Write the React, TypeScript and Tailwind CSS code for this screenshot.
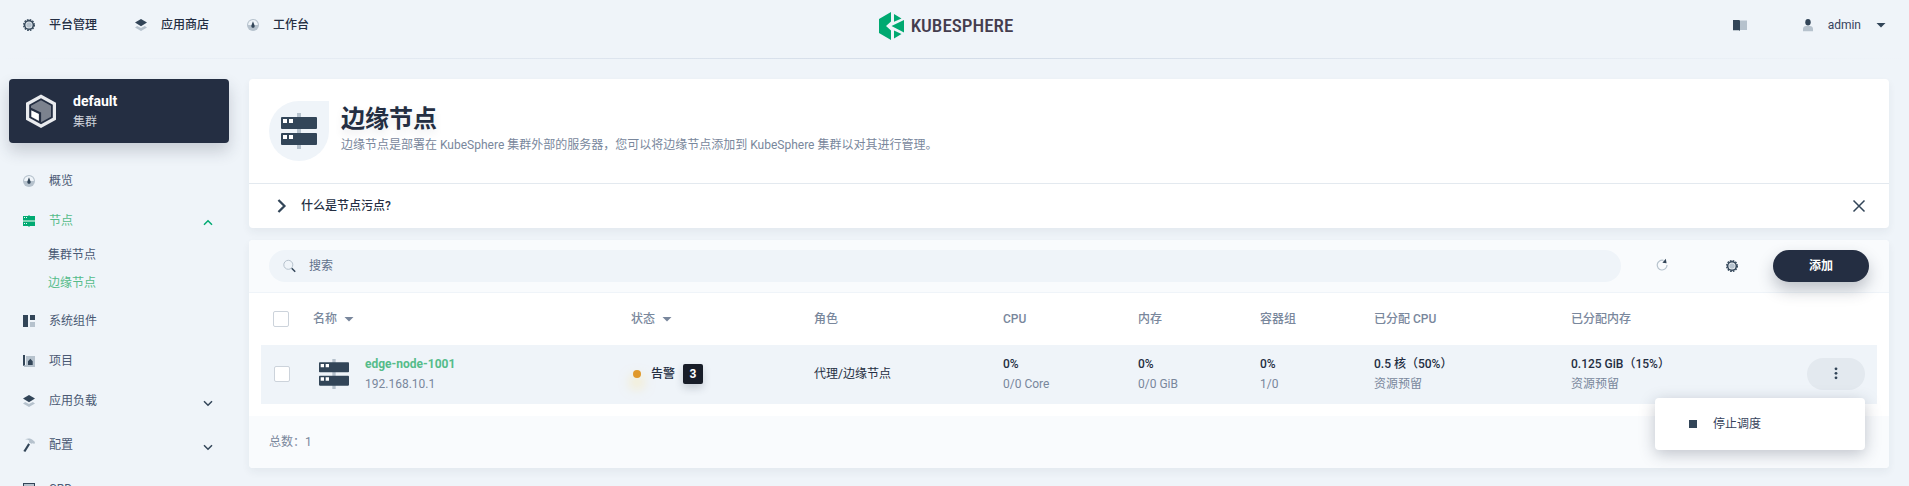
import React, { useState } from "react";

type IconProps = { className?: string };

const DARK = "#324558";
const LIGHT = "#b6c2cd";

function GearIcon({ className = "size-4" }: IconProps) {
  return (
    <svg viewBox="0 0 16 16" className={className} fill="none" aria-hidden="true">
      <circle cx="8" cy="8" r="5.3" stroke={DARK} strokeWidth="1.4" strokeDasharray="1.665 1.11" />
      <circle cx="8" cy="8" r="4.3" stroke={DARK} strokeWidth="1.5" />
      <circle cx="8" cy="8" r="2.8" fill={LIGHT} />
    </svg>
  );
}

function LayersIcon({ className = "size-4" }: IconProps) {
  return (
    <svg viewBox="0 0 16 16" className={className} aria-hidden="true">
      <path d="M4.2 9 2 10.6 8 14l6-3.4L11.8 9 8 11z" fill={LIGHT} />
      <path d="M8 2 14 5.6 8 9.2 2 5.6z" fill={DARK} />
    </svg>
  );
}

function DashboardIcon({ className = "size-4" }: IconProps) {
  return (
    <svg viewBox="0 0 16 16" className={className} aria-hidden="true">
      <circle cx="8" cy="8" r="6" fill={LIGHT} />
      <path d="M8 3a5 5 0 0 1 4.900 5H3.100A5 5 0 0 1 8 3z" fill="#eff4f9" />
      <path d="M8 4.200 9.600 8.600a1.700 1.700 0 1 1-3.200 0z" fill={DARK} />
    </svg>
  );
}

function ServerIcon({ className = "size-9" }: IconProps) {
  return (
    <svg viewBox="2 2 36 36" className={className} aria-hidden="true">
      <path d="M18 2h4v36h-4z" fill={LIGHT} />
      <rect x="2" y="6" width="36" height="12" rx="1" fill={DARK} />
      <rect x="2" y="22" width="36" height="12" rx="1" fill={DARK} />
      <path d="M4 8h4v4H4zM10 8h4v4h-4zM4 24h4v4H4zM10 24h4v4h-4z" fill="#ffffff" />
    </svg>
  );
}

function ServerSmallIcon({ className = "size-4" }: IconProps) {
  return (
    <svg viewBox="0 0 16 16" className={className} aria-hidden="true">
      <path d="M7 2h2v12H7zM2 7h12v2H2z" fill="#7fd4b4" />
      <path d="M2 3h12v4H2zM2 9h12v4H2z" fill="#00aa72" />
      <path d="M3 4h1v1H3zM5 4h1v1H5zM3 10h1v1H3zM5 10h1v1H5z" fill="#eff4f9" />
    </svg>
  );
}

function ComponentsIcon({ className = "size-4" }: IconProps) {
  return (
    <svg viewBox="0 0 16 16" className={className} aria-hidden="true">
      <path d="M2 2h5v12H2zM9 2h5v5H9z" fill={DARK} />
      <path d="M9 9h5v5H9z" fill={LIGHT} />
    </svg>
  );
}

function ProjectIcon({ className = "size-4" }: IconProps) {
  return (
    <svg viewBox="0 0 16 16" className={className} aria-hidden="true">
      <path d="M5 3h9v11H3v-2h2z" fill={LIGHT} />
      <path d="M2 2h2v10l-2 1zM7 12V8.200l2.300-2.500 2.400 2.500V12z" fill={DARK} />
    </svg>
  );
}

function HammerIcon({ className = "size-4" }: IconProps) {
  return (
    <svg viewBox="0 0 16 16" className={className} aria-hidden="true">
      <path d="M4 2.600C6.500.8 10 1 12 3.200l2 1.800-.6 2-1.600-.8-1.400.5-2.600-1.400.6-1.500C7.300 2.700 5.700 2.400 4 2.600z" fill={LIGHT} />
      <path d="M7.300 6.300 9 7.400 4.300 15 2.400 13.900z" fill={DARK} />
    </svg>
  );
}

function CrdIcon({ className = "size-4" }: IconProps) {
  return (
    <svg viewBox="0 0 16 16" className={className} aria-hidden="true">
      <rect x="2.500" y="2.500" width="11" height="11" fill={LIGHT} stroke={DARK} />
    </svg>
  );
}

function Chevron({ className = "size-4" }: IconProps) {
  return (
    <svg viewBox="0 0 16 16" className={className} fill="none" stroke="currentColor" strokeWidth="1.500" aria-hidden="true">
      <path d="m4 6.300 4 4 4-4" />
    </svg>
  );
}

function Caret({ className = "" }: IconProps) {
  return (
    <svg viewBox="0 0 16 16" className={"size-4 " + className} fill="currentColor" aria-hidden="true">
      <path d="M3.500 6h9L8 10.500z" />
    </svg>
  );
}

function CubeIcon() {
  return (
    <svg viewBox="0 0 40 40" className="size-10 shrink-0" aria-hidden="true">
      <path d="M20 3.500 35 11.800v16.900L20 37 5 28.700V11.800z" fill="#e9ebee" />
      <path d="M20 7.200 31.800 13.700v13.100L20 33.300 8.200 26.800V13.700z" fill="#242e42" />
      <path d="M20 9.200 30 14.800v10.900L20 31.300 10 25.700V14.800z" fill="#7c828e" />
      <path d="M9.500 17.800 19 22.300v9.400" fill="none" stroke="#242e42" strokeWidth="2.200" />
      <path d="M10.500 19.500 17.800 23v6.800l-7.300-4z" fill="#ffffff" />
    </svg>
  );
}

const topNav = [
  { label: "平台管理", Icon: GearIcon },
  { label: "应用商店", Icon: LayersIcon },
  { label: "工作台", Icon: DashboardIcon },
];

function Header() {
  return (
    <header className="shrink-0">
      <div className="grid h-[58px] grid-cols-3 items-start pt-4 pr-5 pl-[21px]">
        <nav className="flex gap-9">
          {topNav.map(({ label, Icon }) => (
            <a key={label} href="#" className="flex items-center gap-3 font-medium leading-[18px] text-[#242e42]">
              <Icon className="size-4" />
              {label}
            </a>
          ))}
        </nav>
        <a href="#" className="-mt-1 flex items-center justify-center gap-1.5 pr-[18px] text-[#443d4e]" aria-label="KUBESPHERE">
          <svg viewBox="0 0 26 28" className="h-7 w-[26px]" aria-hidden="true">
            <path d="M12 0v9.500L7 14l5 4.500V28L0 21V7z" fill="#00a971" />
            <path d="M15 2 22.500 6.500 15 9.800zM25 8v12.500L12.500 14zM15 18.500l7.500 3.500-7.500 4.500z" fill="#00a971" />
          </svg>
          <span className="font-['Roboto_Condensed','Liberation_Sans_Narrow','Noto_Sans_CJK_SC',sans-serif] text-[19px] font-medium leading-7">
            KUBESPHERE
          </span>
        </a>
        <div className="flex items-center justify-end leading-[18px]">
          <button type="button" aria-label="文档" className="mr-13">
            <svg viewBox="0 0 16 16" className="size-4" aria-hidden="true">
              <path d="M8 3.500h7v9.500H8z" fill={LIGHT} />
              <path d="M1 3h6l1 .5V14l-1-.8H1z" fill={DARK} />
            </svg>
          </button>
          <button type="button" className="flex items-center gap-3 text-[#36435c]">
            <svg viewBox="0 0 16 16" className="size-4" aria-hidden="true">
              <path d="M3 12c0-2 1.500-3 3-3h4c1.500 0 3 1 3 3v2.300H3z" fill={LIGHT} />
              <ellipse cx="8" cy="5.200" rx="2.700" ry="3.200" fill={DARK} />
            </svg>
            admin
            <Caret className="text-[#324558]" />
          </button>
        </div>
      </div>
      <div className="h-px bg-linear-to-r from-transparent via-[#d3dce8] to-transparent" />
    </header>
  );
}

type NavItem = { label: string; Icon: (p: IconProps) => React.ReactElement; children?: string[]; open?: boolean };

const sideNav: NavItem[] = [
  { label: "概览", Icon: DashboardIcon },
  { label: "节点", Icon: ServerSmallIcon, children: ["集群节点", "边缘节点"], open: true },
  { label: "系统组件", Icon: ComponentsIcon },
  { label: "项目", Icon: ProjectIcon },
  { label: "应用负载", Icon: LayersIcon, children: [] },
  { label: "配置", Icon: HammerIcon, children: [] },
  { label: "CRD", Icon: CrdIcon },
];

function Sidebar() {
  return (
    <aside className="w-[249px] shrink-0 overflow-y-auto pt-5 pr-5 pl-[9px] [scrollbar-width:none]">
      <button
        type="button"
        className="flex h-16 w-full items-center gap-3 rounded-sm bg-[#242e42] px-3 text-left shadow-[0_8px_16px_0_rgba(36,46,66,0.2)]"
      >
        <CubeIcon />
        <span className="flex flex-col pb-px">
          <span className="text-sm font-bold leading-[22px] text-white">default</span>
          <span className="leading-5 text-[#d0d4dc]">集群</span>
        </span>
      </button>
      <ul className="mt-[18px] text-[#4a5974]">
        {sideNav.map(({ label, Icon, children, open }) => (
          <li key={label} className={children && !open ? "mb-1" : ""}>
            <a href="#" className={"flex h-10 items-center gap-3 pr-[13px] pl-3 " + (open ? "text-[#55bc8a]" : "")}>
              <Icon className="size-4" />
              <span className="flex-1">{label}</span>
              {children && <Chevron className={open ? "mt-1 size-4 rotate-180 text-[#00aa72]" : "mt-1 size-4 text-[#324558]"} />}
            </a>
            {open && (
              <ul className="pb-1 pl-[39px]">
                {children?.map((c) => (
                  <li key={c}>
                    <a href="#" className={"flex h-7 items-center " + (c === "边缘节点" ? "text-[#55bc8a]" : "")}>
                      {c}
                    </a>
                  </li>
                ))}
              </ul>
            )}
          </li>
        ))}
      </ul>
    </aside>
  );
}

function Banner() {
  return (
    <section className="rounded-sm bg-white shadow-[0_4px_8px_0_rgba(36,46,66,0.06)]">
      <div className="flex gap-3 px-5 py-[22px]">
        <div className="flex size-[60px] items-center justify-center rounded-full rounded-tr-none bg-[#eff4f9]">
          <ServerIcon className="size-9" />
        </div>
        <div>
          <h1 className="text-2xl font-bold leading-9 text-[#242e42] text-shadow-[0_4px_8px_rgba(36,46,66,0.1)]">边缘节点</h1>
          <p className="leading-4 text-[#79879c]">
            边缘节点是部署在 KubeSphere 集群外部的服务器，您可以将边缘节点添加到 KubeSphere 集群以对其进行管理。
          </p>
        </div>
      </div>
      <div className="flex h-[45px] items-center justify-between border-t border-[#e3e9ef] px-5">
        <button type="button" className="flex items-center gap-2 font-medium text-[#242e42]">
          <Chevron className="size-6 -rotate-90 text-[#324558]" />
          什么是节点污点?
        </button>
        <button type="button" aria-label="关闭" className="text-[#324558]">
          <svg viewBox="0 0 20 20" className="size-5" fill="none" stroke="currentColor" strokeWidth="1.500" aria-hidden="true">
            <path d="m4.500 4.500 11 11M15.500 4.500l-11 11" />
          </svg>
        </button>
      </div>
    </section>
  );
}

function Toolbar() {
  return (
    <div className="flex items-center rounded-t-sm border-b border-[#eff4f9] bg-[#f9fbfd] px-5 py-2.5">
      <label className="flex h-8 flex-1 items-center gap-3 rounded-full bg-[#eff4f9] px-3">
        <svg viewBox="0 0 16 16" className="size-4" fill="none" aria-hidden="true">
          <circle cx="7.300" cy="6.800" r="4.500" stroke={LIGHT} />
          <path d="m10.700 10.200 3.500 3.600" stroke={DARK} strokeWidth="1.500" />
        </svg>
        <input
          type="text"
          placeholder="搜索"
          aria-label="搜索"
          className="flex-1 bg-transparent text-[#36435c] outline-none placeholder:text-[#5f708a]"
        />
      </label>
      <button type="button" aria-label="刷新" className="ml-3 flex h-8 w-[58px] items-center justify-center">
        <svg viewBox="0 0 16 16" className="size-4" fill="none" aria-hidden="true">
          <path d="M9.500 2.400A4.900 4.900 0 1 0 13 7" stroke={LIGHT} strokeWidth="1.200" />
          <path d="M11.800.8 12.600 5.200 8.400 4.800z" fill={DARK} />
        </svg>
      </button>
      <button type="button" aria-label="设置" className="ml-3 flex h-8 w-[58px] items-center justify-center">
        <GearIcon className="size-4" />
      </button>
      <button
        type="button"
        className="ml-3 h-8 w-24 rounded-full bg-[#242e42] font-bold text-white shadow-[0_8px_16px_0_rgba(35,45,65,0.28)]"
      >
        添加
      </button>
    </div>
  );
}

function CheckBox({ label }: { label: string }) {
  return (
    <input
      type="checkbox"
      aria-label={label}
      className="block size-4 appearance-none rounded-xs border border-[#ccd3db] bg-white checked:bg-[#324558]"
    />
  );
}

function Stat({ value, note, href }: { value: string; note: string; href?: string }) {
  return (
    <div className="leading-5">
      {href ? (
        <a href={href} className="block font-bold text-[#55bc8a]">{value}</a>
      ) : (
        <div className="font-medium text-[#242e42]">{value}</div>
      )}
      <div className="text-[#79879c]">{note}</div>
    </div>
  );
}

const columns = [
  { label: "名称", width: "", sortable: true },
  { label: "状态", width: "w-[183px]", sortable: true },
  { label: "角色", width: "w-[189px]" },
  { label: "CPU", width: "w-[135px]" },
  { label: "内存", width: "w-[122px]" },
  { label: "容器组", width: "w-[114px]" },
  { label: "已分配 CPU", width: "w-[197px]" },
  { label: "已分配内存", width: "w-[198px]" },
];

const stats = [
  { value: "0%", note: "0/0 Core" },
  { value: "0%", note: "0/0 GiB" },
  { value: "0%", note: "1/0" },
  { value: "0.5 核（50%）", note: "资源预留" },
  { value: "0.125 GiB（15%）", note: "资源预留" },
];

function RowMenu() {
  const [open, setOpen] = useState(true);
  return (
    <div className="relative flex justify-end">
      <button
        type="button"
        aria-label="更多操作"
        aria-expanded={open}
        onClick={() => setOpen(!open)}
        className="flex h-8 w-[58px] items-center justify-center rounded-full bg-[#e3e9ef] text-[#324558]"
      >
        <svg viewBox="0 0 16 16" className="size-4" fill="currentColor" aria-hidden="true">
          <circle cx="8" cy="2.800" r="1.400" />
          <circle cx="8" cy="7.300" r="1.400" />
          <circle cx="8" cy="11.800" r="1.400" />
        </svg>
      </button>
      {open && (
        <div className="absolute top-full right-0 z-10 mt-2 w-[210px] rounded-sm bg-white py-2 shadow-[0_4px_16px_0_rgba(39,50,71,0.28)]">
          <button type="button" className="flex h-9 w-full items-center gap-3 px-[30px] text-[#36435c]">
            <svg viewBox="0 0 16 16" className="size-4" aria-hidden="true">
              <path d="M4 4h8v8H4z" fill={DARK} />
            </svg>
            停止调度
          </button>
        </div>
      )}
    </div>
  );
}

function NodeTable() {
  return (
    <div className="px-3 pb-3">
      <table className="w-full table-fixed border-collapse text-left">
        <thead>
          <tr className="h-[52px] text-[#79879c]">
            <th className="w-10 pl-3">
              <CheckBox label="全选" />
            </th>
            {columns.map((c) => (
              <th key={c.label} className={"pl-3 font-medium " + c.width}>
                <span className="flex items-center gap-1">
                  {c.label}
                  {c.sortable && <Caret />}
                </span>
              </th>
            ))}
            <th className="w-30" aria-label="操作" />
          </tr>
        </thead>
        <tbody>
          <tr className="h-[59px] bg-[#eff4f9]">
            <td className="pb-px pl-[13px]">
              <CheckBox label="edge-node-1001" />
            </td>
            <td className="pb-px pl-3">
              <div className="flex items-center gap-4 pl-1.5">
                <ServerIcon className="size-[30px]" />
                <Stat value="edge-node-1001" note="192.168.10.1" href="#" />
              </div>
            </td>
            <td className="pb-px pl-3">
              <div className="flex items-center text-[#242e42]">
                <span className="mx-0.5 size-2 rounded-full bg-[#e0992c] shadow-[0_8px_12px_2px_rgba(255,225,130,0.5)]" />
                <span className="ml-2 font-medium">告警</span>
                <span className="ml-2 flex size-5 items-center justify-center rounded-xs bg-[#181d28] font-bold text-white shadow-[0_4px_8px_0_rgba(36,46,66,0.2)]">
                  3
                </span>
              </div>
            </td>
            <td className="pb-px pl-3 text-[#242e42]">代理/边缘节点</td>
            {stats.map((s, i) => (
              <td key={i} className="pb-px pl-3">
                <Stat value={s.value} note={s.note} />
              </td>
            ))}
            <td className="pr-3 pb-px">
              <RowMenu />
            </td>
          </tr>
        </tbody>
      </table>
    </div>
  );
}

export default function App() {
  return (
    <div className="flex h-screen flex-col overflow-hidden bg-[#eff4f9] font-[Roboto,'Noto_Sans_CJK_SC',sans-serif] text-xs">
      <Header />
      <div className="flex min-h-0 flex-1">
        <Sidebar />
        <main className="flex min-w-0 flex-1 flex-col gap-3 pt-5 pr-5">
          <Banner />
          <section className="rounded-sm bg-white shadow-[0_4px_8px_0_rgba(36,46,66,0.06)]">
            <Toolbar />
            <NodeTable />
            <footer className="flex h-[52px] items-center rounded-b-sm bg-[#f9fbfd] px-5 text-[#79879c]">总数：1</footer>
          </section>
        </main>
      </div>
    </div>
  );
}
